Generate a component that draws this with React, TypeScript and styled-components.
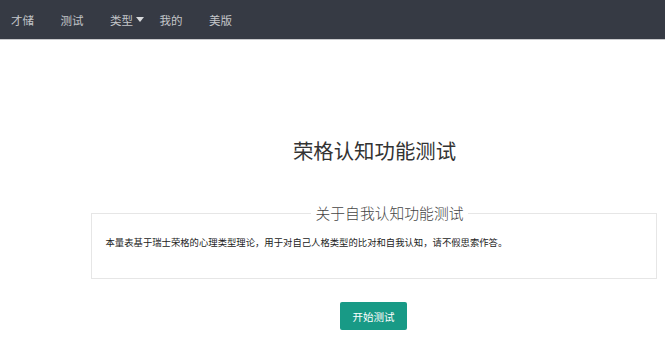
import styled, { createGlobalStyle } from "styled-components";

const GlobalStyle = createGlobalStyle`
  body {
    margin: 0;
    background: #fff;
    font-family: "Microsoft YaHei", "Noto Sans CJK SC", sans-serif;
  }
`;

const NavBar = styled.nav`
  height: 39px;
  background-color: #363a44;
  display: flex;
  align-items: center;
  padding-left: 11px;
  border-bottom: 1px solid #c9cacd;
`;

const NavItem = styled.a`
  color: #c3c5c9;
  font-size: 11.5px;
  width: 49.5px;
  display: flex;
  align-items: center;
  gap: 3px;
  text-decoration: none;
  cursor: pointer;
`;

const Caret = styled.span`
  width: 0;
  height: 0;
  border-left: 4.5px solid transparent;
  border-right: 4.5px solid transparent;
  border-top: 5px solid #d8dadd;
`;

const Main = styled.main`
  display: flex;
  flex-direction: column;
  align-items: center;
  padding-top: 96px;
  padding-left: 82px;
`;

const Title = styled.h1`
  margin: 0 0 0 2px;
  font-size: 20.4px;
  font-weight: 400;
  color: #333;
  line-height: 28px;
`;

const Fieldset = styled.fieldset`
  margin: 39px 0 0;
  width: 566px;
  box-sizing: border-box;
  border: 1px solid #e6e6e6;
  padding: 0 14px;
  height: 76px;
`;

const Legend = styled.legend`
  margin-left: 205px;
  padding: 0 5px;
  font-size: 14.8px;
  color: #444;
  font-weight: 300;
  line-height: 20px;
`;

const Intro = styled.p`
  margin: 12px 0 0;
  font-size: 9.35px;
  color: #222;
  white-space: nowrap;
`;

const StartButton = styled.button`
  margin-top: 23px;
  width: 67px;
  height: 28px;
  border: none;
  border-radius: 2px;
  background-color: #189a86;
  color: #fff;
  font-family: inherit;
  font-size: 10.5px;
  cursor: pointer;
`;

export default function App() {
  return (
    <>
      <GlobalStyle />
      <NavBar>
        <NavItem>才储</NavItem>
        <NavItem>测试</NavItem>
        <NavItem>
          类型 <Caret />
        </NavItem>
        <NavItem>我的</NavItem>
        <NavItem>美版</NavItem>
      </NavBar>
      <Main>
        <Title>荣格认知功能测试</Title>
        <Fieldset>
          <Legend>关于自我认知功能测试</Legend>
          <Intro>
            本量表基于瑞士荣格的心理类型理论，用于对自己人格类型的比对和自我认知，请不假思索作答。
          </Intro>
        </Fieldset>
        <StartButton>开始测试</StartButton>
      </Main>
    </>
  );
}
